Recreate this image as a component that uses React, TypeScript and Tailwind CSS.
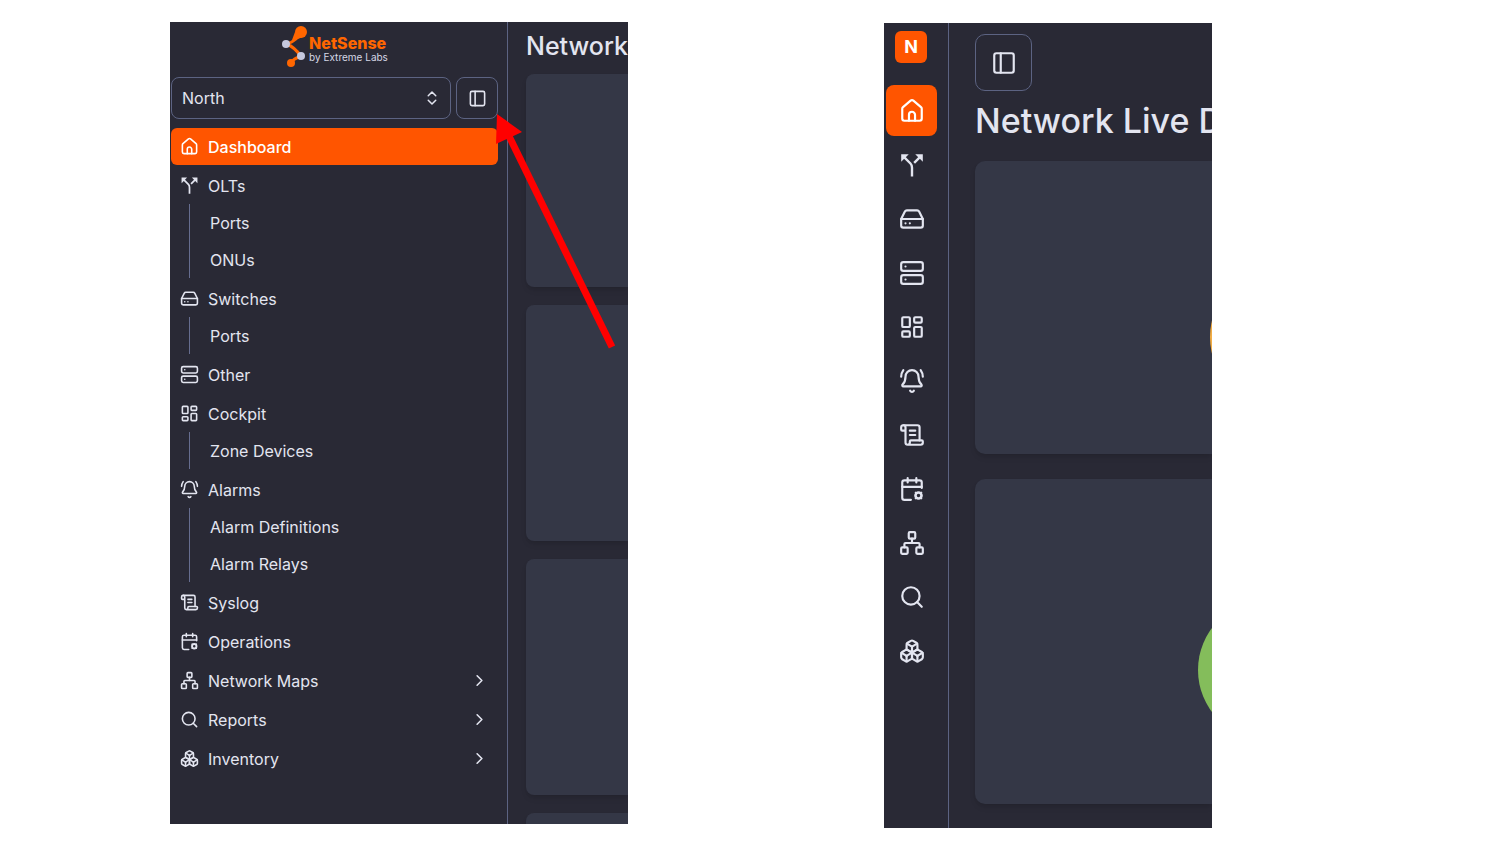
import React from "react"
import {
	BellRing,
	Boxes,
	ChevronRight,
	ChevronsUpDown,
	HardDrive,
	LayoutDashboard,
	Network,
	PanelLeft,
	ScrollText,
	Search,
	Server,
} from "lucide-react"

type IconProps = { className?: string }

type NavItem = {
	label: string
	icon: React.ElementType
	children?: string[]
	expandable?: boolean
}

function HomeIcon({ className }: IconProps) {
	return (
		<svg
			viewBox="0 0 24 24"
			className={className}
			fill="none"
			stroke="currentColor"
			strokeWidth="2"
			strokeLinecap="round"
			strokeLinejoin="round"
		>
			<path d="M14.8 21v-5.5a2.8 2.8 0 0 0-5.6 0V21" />
			<path d="M3 10a2 2 0 0 1 .709-1.528l7-5.999a2 2 0 0 1 2.582 0l7 5.999A2 2 0 0 1 21 10v9a2 2 0 0 1-2 2H5a2 2 0 0 1-2-2z" />
		</svg>
	)
}

function ForkIcon({ className }: IconProps) {
	return (
		<svg
			viewBox="0 0 24 24"
			className={className}
			fill="none"
			stroke="currentColor"
			strokeWidth="2.2"
		>
			<path d="M2 2h7L2 9z" fill="currentColor" stroke="none" />
			<path d="M22 2h-7l7 7z" fill="currentColor" stroke="none" />
			<path d="M4 4l6.6 6.6Q12 12 12 14.5V22.5" />
			<path d="M20 4l-6 6" />
		</svg>
	)
}

function CalendarGearIcon({ className }: IconProps) {
	return (
		<svg
			viewBox="0 0 24 24"
			className={className}
			fill="none"
			stroke="currentColor"
			strokeWidth="2"
			strokeLinecap="round"
			strokeLinejoin="round"
		>
			<path d="M8 2v4M16 2v4M3 10h18" />
			<path d="M21 11V6a2 2 0 0 0-2-2H5a2 2 0 0 0-2 2v14a2 2 0 0 0 2 2h6" />
			<circle cx="18" cy="18" r="2.8" strokeWidth="2.4" />
			<path
				d="M15.2 15.2l.6.6M20.8 15.2l-.6.6M15.2 20.8l.6-.6M20.8 20.8l-.6-.6"
				strokeWidth="1.5"
			/>
		</svg>
	)
}

const navItems: NavItem[] = [
	{ label: "Dashboard", icon: HomeIcon },
	{ label: "OLTs", icon: ForkIcon, children: ["Ports", "ONUs"] },
	{ label: "Switches", icon: HardDrive, children: ["Ports"] },
	{ label: "Other", icon: Server },
	{ label: "Cockpit", icon: LayoutDashboard, children: ["Zone Devices"] },
	{
		label: "Alarms",
		icon: BellRing,
		children: ["Alarm Definitions", "Alarm Relays"],
	},
	{ label: "Syslog", icon: ScrollText },
	{ label: "Operations", icon: CalendarGearIcon },
	{ label: "Network Maps", icon: Network, expandable: true },
	{ label: "Reports", icon: Search, expandable: true },
	{ label: "Inventory", icon: Boxes, expandable: true },
]

function Logo() {
	return (
		<a href="#" className="flex h-12 items-center justify-center">
			<svg viewBox="0 0 26 42" className="h-[42px] w-[26px]" aria-hidden="true">
				<path
					d="M20 7C17 14 12 17 6 19C11 21 16 26 20 31C15 33 12 34 10 38"
					fill="none"
					stroke="#ff6600"
					strokeWidth="3"
				/>
				<path d="M14 7L11 15L17 14L24 11Z" fill="#ff6600" />
				<circle cx="20" cy="7" r="6" fill="#ff6600" />
				<circle cx="10" cy="38" r="4" fill="#ff6600" />
				<circle cx="5" cy="19" r="4" fill="#c5c8de" />
				<circle cx="20" cy="31" r="4" fill="#c5c8de" />
			</svg>
			<span className="ml-0.5 flex flex-col pt-1.5">
				<span className="text-base leading-4 font-extrabold text-[#ff6600]">
					NetSense
				</span>
				<span className="text-[10px] leading-3 text-[#d5d7e5]">
					by Extreme Labs
				</span>
			</span>
		</a>
	)
}

function NavEntry({ item, active }: { item: NavItem; active: boolean }) {
	const Icon = item.icon

	return (
		<li>
			<a
				href="#"
				className={active
					? "flex h-[37px] items-center gap-[9px] rounded-md bg-[#ff5500] px-[9px] font-medium text-white"
					: "flex h-[37px] items-center gap-[9px] rounded-md px-[9px]"}
			>
				<Icon className="size-[19px] shrink-0" />
				<span className="flex-1">{item.label}</span>
				{item.expandable && <ChevronRight className="size-[19px]" />}
			</a>
			{item.children && (
				<ul className="ml-[18px] border-l border-[#666d8f]">
					{item.children.map((child) => (
						<li key={child}>
							<a href="#" className="flex h-[37px] items-center pl-5">
								{child}
							</a>
						</li>
					))}
				</ul>
			)}
		</li>
	)
}

function ExpandedPanel() {
	return (
		<section className="relative mt-[22px] flex h-[802px] bg-[#292935]">
			<aside className="w-[338px] shrink-0 border-r border-[#5c6382] pr-[9px] pl-px">
				<Logo />
				<div className="mt-[7px] flex gap-[5px]">
					<div className="relative flex-1">
						<select
							aria-label="Region"
							className="h-[42px] w-full appearance-none rounded-lg border border-[#5c6382] bg-transparent px-2.5"
						>
							<option>North</option>
						</select>
						<ChevronsUpDown className="pointer-events-none absolute top-3 right-2.5 size-[18px]" />
					</div>
					<button
						type="button"
						aria-label="Toggle sidebar"
						className="flex size-[42px] items-center justify-center rounded-lg border border-[#5c6382]"
					>
						<PanelLeft className="size-[19px]" />
					</button>
				</div>
				<nav className="mt-[9px]">
					<ul className="flex flex-col gap-0.5">
						{navItems.map((item, i) => (
							<NavEntry key={item.label} item={item} active={i === 0} />
						))}
					</ul>
				</nav>
			</aside>
			<main className="flex w-[120px] flex-col overflow-hidden pl-[18px]">
				<h1 className="mt-2 mb-3 text-[25px] leading-8 font-medium whitespace-nowrap">
					Network Live Dashboard
				</h1>
				<div className="flex flex-col gap-[18px]">
					<div className="h-[213px] rounded-l-lg bg-[#343746] shadow-md" />
					<div className="h-[236px] rounded-l-lg bg-[#343746] shadow-md" />
					<div className="h-[236px] rounded-l-lg bg-[#343746] shadow-md" />
					<div className="h-[236px] rounded-l-lg bg-[#343746] shadow-md" />
				</div>
			</main>
			{/* Arrow pointing at the sidebar toggle */}
			<svg
				viewBox="0 0 124 240"
				className="pointer-events-none absolute top-[90px] left-[324px] h-[240px] w-[124px]"
				aria-hidden="true"
			>
				<path d="M3 2L28 20L2 32Z" fill="#ff0000" />
				<path d="M14 22L118 235" stroke="#ff0000" strokeWidth="7" />
			</svg>
		</section>
	)
}

function CollapsedPanel() {
	return (
		<section className="mt-[23px] flex h-[805px] bg-[#292935]">
			<aside className="flex w-[65px] shrink-0 flex-col border-r border-[#5c6382] pl-0.5">
				<div className="mt-2 ml-[9px] flex size-8 items-center justify-center rounded-md bg-[#ff5500] text-lg leading-8 font-bold text-white">
					N
				</div>
				<nav className="mt-[22px]">
					<ul className="flex flex-col gap-[3px]">
						{navItems.map(({ label, icon: Icon }, i) => (
							<li key={label}>
								<a
									href="#"
									aria-label={label}
									className={i === 0
										? "flex size-[51px] items-center justify-center rounded-lg bg-[#ff5500] text-white"
										: "flex size-[51px] items-center justify-center rounded-lg"}
								>
									<Icon className="size-[26px]" />
								</a>
							</li>
						))}
					</ul>
				</nav>
			</aside>
			<main className="flex w-[263px] flex-col overflow-hidden pl-[26px]">
				<button
					type="button"
					aria-label="Toggle sidebar"
					className="mt-[11px] flex size-[57px] shrink-0 items-center justify-center rounded-[10px] border border-[#5c6382]"
				>
					<PanelLeft className="size-[26px]" />
				</button>
				<h1 className="mt-2.5 mb-5 text-[34px] leading-10 font-medium whitespace-nowrap">
					Network Live Dashboard
				</h1>
				<div className="flex flex-col gap-[25px]">
					<div className="relative h-[293px] rounded-l-[10px] bg-[#343746] shadow-md">
						<div className="absolute top-[106px] left-[235px] size-[140px] rounded-full bg-[#f2ad45]" />
					</div>
					<div className="relative h-[325px] rounded-l-[10px] bg-[#343746] shadow-md">
						<div className="absolute top-[121px] left-[223px] size-[140px] rounded-full bg-[#84bd5b]" />
					</div>
				</div>
			</main>
		</section>
	)
}

export default function App() {
	return (
		<div className="flex min-h-screen items-start gap-[256px] overflow-hidden bg-white pl-[170px] font-['Inter',sans-serif] text-base text-[#e3e5f0]">
			<ExpandedPanel />
			<CollapsedPanel />
		</div>
	)
}
